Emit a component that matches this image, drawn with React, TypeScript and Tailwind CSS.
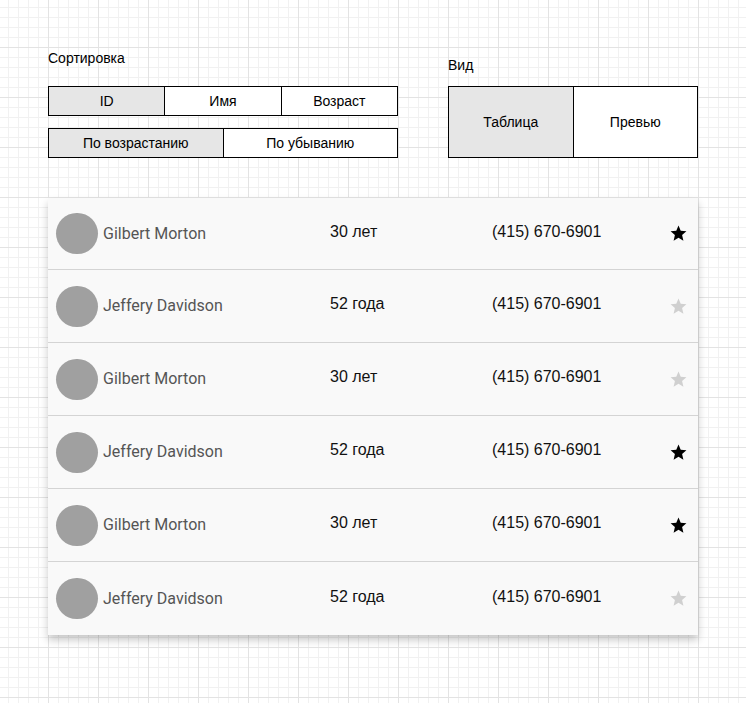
import React from 'react';

type Person = {
  name: string;
  age: string;
  phone: string;
  starred: boolean;
};

const people: Person[] = [
  { name: 'Gilbert Morton', age: '30 лет', phone: '(415) 670-6901', starred: true },
  { name: 'Jeffery Davidson', age: '52 года', phone: '(415) 670-6901', starred: false },
  { name: 'Gilbert Morton', age: '30 лет', phone: '(415) 670-6901', starred: false },
  { name: 'Jeffery Davidson', age: '52 года', phone: '(415) 670-6901', starred: true },
  { name: 'Gilbert Morton', age: '30 лет', phone: '(415) 670-6901', starred: true },
  { name: 'Jeffery Davidson', age: '52 года', phone: '(415) 670-6901', starred: false },
];

function Star({ active }: { active: boolean }) {
  return (
    <svg
      className={active ? 'text-black' : 'text-[#d0d0d0]'}
      width="19"
      height="19"
      viewBox="0 0 24 24"
      fill="currentColor"
    >
      <path d="M12 17.27L18.18 21l-1.64-7.03L22 9.24l-7.19-.61L12 2 9.19 8.63 2 9.24l5.46 4.73L5.82 21z" />
    </svg>
  );
}

function Segment({ label, active, first }: { label: string; active?: boolean; first?: boolean }) {
  return (
    <div
      className={`flex-1 flex items-center justify-center ${first ? '' : 'border-l border-black'} ${
        active ? 'bg-[#e6e6e6]' : 'bg-white'
      }`}
    >
      {label}
    </div>
  );
}

export default function App() {
  return (
    <div className="min-h-screen w-full bg-white text-black font-['Liberation_Sans',Arial,sans-serif] [background-image:linear-gradient(to_right,#e3e3e3_1px,transparent_1px),linear-gradient(to_bottom,#e3e3e3_1px,transparent_1px),linear-gradient(to_right,#f1f1f1_1px,transparent_1px),linear-gradient(to_bottom,#f1f1f1_1px,transparent_1px)] [background-size:50px_50px,50px_50px,10px_10px,10px_10px] [background-position:48px_47px,48px_47px,8px_7px,8px_7px]">
      <div className="pl-12 pt-[50px] pb-[68px]">
        {/* Панель управления */}
        <div className="flex gap-[50px] text-[14px] leading-4">
          <div className="w-[350px]">
            <p>Сортировка</p>
            <div className="mt-5 h-[30px] flex border border-black">
              <Segment label="ID" active first />
              <Segment label="Имя" />
              <Segment label="Возраст" />
            </div>
            <div className="mt-3 h-[30px] flex border border-black">
              <Segment label="По возрастанию" active first />
              <Segment label="По убыванию" />
            </div>
          </div>

          <div className="w-[250px] pt-[7px]">
            <p>Вид</p>
            <div className="mt-[13px] h-[72px] flex border border-black">
              <Segment label="Таблица" active first />
              <Segment label="Превью" />
            </div>
          </div>
        </div>

        {/* Список */}
        <div className="mt-10 w-[650px] bg-[#f9f9f9] shadow-[0_5px_8px_rgba(0,0,0,0.22)] divide-y divide-[#d4d4d4]">
          {people.map((p, idx) => (
            <div key={idx} className="h-[73px] first:h-[72px] flex items-center">
              <div className="w-[282px] flex items-center pl-2">
                <div className="w-[42px] h-[41px] rounded-full bg-[#a0a0a0]" />
                <span className="ml-[5px] font-['Roboto',sans-serif] text-[16px] text-[#555]">{p.name}</span>
              </div>
              <div className="w-[162px] mb-1 text-[16px] text-[#111]">{p.age}</div>
              <div className="w-[177px] mb-1 text-[16px] text-[#111]">{p.phone}</div>
              <Star active={p.starred} />
            </div>
          ))}
        </div>
      </div>
    </div>
  );
}
